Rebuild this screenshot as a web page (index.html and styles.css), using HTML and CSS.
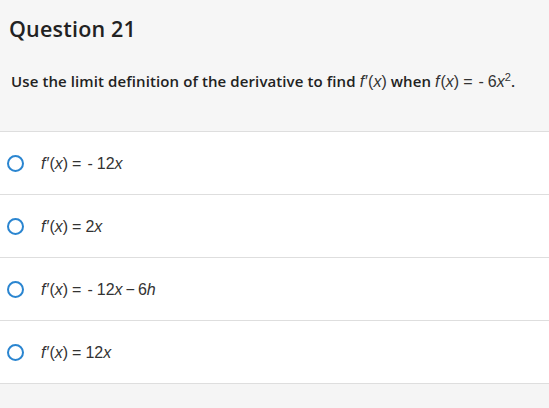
FILE: index.html
```html
<!DOCTYPE html>
<html>
<head>
<meta charset="utf-8">
<link rel="stylesheet" href="styles.css">
</head>
<body>
<div class="page">
  <div class="header">
    <h1 class="title">Question 21</h1>
    <p class="prompt">Use the limit definition of the derivative to find <span class="math"><i class="fn">f</i>′(<i>x</i>)</span> when <span class="math"><i class="fn">f</i>(<i>x</i>)<span class="op">=</span><span class="neg">-</span>6<i>x</i><sup>2</sup></span>.</p>
  </div>
  <ul class="options">
    <li class="option"><span class="radio"></span><span class="math"><i class="fn">f</i>′(<i>x</i>)<span class="op">=</span><span class="neg">-</span>12<i>x</i></span></li>
    <li class="option"><span class="radio"></span><span class="math"><i class="fn">f</i>′(<i>x</i>)<span class="op">=</span>2<i>x</i></span></li>
    <li class="option"><span class="radio"></span><span class="math"><i class="fn">f</i>′(<i>x</i>)<span class="op">=</span><span class="neg">-</span>12<i>x</i><span class="minus">−</span>6<i>h</i></span></li>
    <li class="option"><span class="radio"></span><span class="math"><i class="fn">f</i>′(<i>x</i>)<span class="op">=</span>12<i>x</i></span></li>
  </ul>
</div>
</body>
</html>
```

FILE: styles.css
```css
html, body {
  margin: 0;
  padding: 0;
  background: #f5f5f5;
}
.page {
  width: 549px;
  height: 408px;
  background: #f5f5f5;
}
.header {
  background: #f6f6f6;
  height: 132px;
  border-bottom: 1px solid #dedede;
  padding: 0 0 0 10px;
  box-sizing: border-box;
  display: flex;
  flex-direction: column;
}
.title {
  font-family: "Open Sans", sans-serif;
  font-weight: 600;
  font-size: 21.5px;
  color: #222;
  margin: 14px 0 0 -1px;
  line-height: 30px;
  letter-spacing: 0.2px;
}
.prompt {
  font-family: "Open Sans", sans-serif;
  font-weight: 600;
  font-size: 15px;
  color: #222;
  margin: 26px 0 0 1px;
  line-height: 22px;
  letter-spacing: 0.1px;
}
.prompt .math {
  font-family: "Liberation Sans", Arial, sans-serif;
  font-weight: 400;
  font-size: 16px;
  color: #333;
  letter-spacing: 0;
}
.math i {
  font-style: italic;
}
.math .fn {
  margin-right: 1px;
}
.math .op {
  margin: 0 4px 0 4px;
}
.math .neg {
  margin: 0 4px 0 2px;
}
.math .minus {
  margin: 0 3px;
}
.math sup {
  font-size: 11px;
  line-height: 0;
}
.options {
  list-style: none;
  margin: 0;
  padding: 0;
  background: #fff;
}
.option {
  height: 63px;
  border-bottom: 1px solid #dedede;
  box-sizing: border-box;
  display: flex;
  align-items: center;
  padding-left: 7px;
}
.radio {
  width: 13px;
  height: 13px;
  border: 2px solid #2a85d0;
  border-radius: 50%;
  margin-right: 17px;
  margin-top: 1px;
}
.option .math {
  font-family: "Liberation Sans", Arial, sans-serif;
  font-size: 16px;
  color: #333;
  margin-top: 2px;
}
```
